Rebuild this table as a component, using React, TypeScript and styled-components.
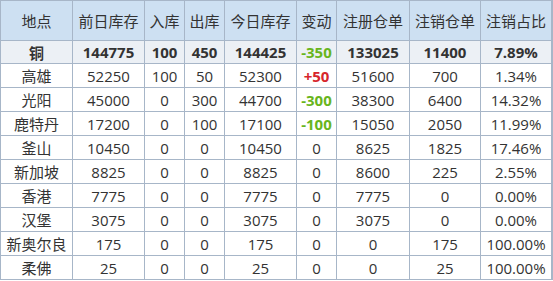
import styled, { createGlobalStyle } from "styled-components";

type Row = {
	name: string;
	prev: string;
	inQty: string;
	outQty: string;
	today: string;
	change: string;
	reg: string;
	cancel: string;
	ratio: string;
};

const headers = ["地点", "前日库存", "入库", "出库", "今日库存", "变动", "注册仓单", "注销仓单", "注销占比"];

const total: Row = {
	name: "铜",
	prev: "144775",
	inQty: "100",
	outQty: "450",
	today: "144425",
	change: "-350",
	reg: "133025",
	cancel: "11400",
	ratio: "7.89%",
};

const rows: Row[] = [
	{ name: "高雄", prev: "52250", inQty: "100", outQty: "50", today: "52300", change: "+50", reg: "51600", cancel: "700", ratio: "1.34%" },
	{ name: "光阳", prev: "45000", inQty: "0", outQty: "300", today: "44700", change: "-300", reg: "38300", cancel: "6400", ratio: "14.32%" },
	{ name: "鹿特丹", prev: "17200", inQty: "0", outQty: "100", today: "17100", change: "-100", reg: "15050", cancel: "2050", ratio: "11.99%" },
	{ name: "釜山", prev: "10450", inQty: "0", outQty: "0", today: "10450", change: "0", reg: "8625", cancel: "1825", ratio: "17.46%" },
	{ name: "新加坡", prev: "8825", inQty: "0", outQty: "0", today: "8825", change: "0", reg: "8600", cancel: "225", ratio: "2.55%" },
	{ name: "香港", prev: "7775", inQty: "0", outQty: "0", today: "7775", change: "0", reg: "7775", cancel: "0", ratio: "0.00%" },
	{ name: "汉堡", prev: "3075", inQty: "0", outQty: "0", today: "3075", change: "0", reg: "3075", cancel: "0", ratio: "0.00%" },
	{ name: "新奥尔良", prev: "175", inQty: "0", outQty: "0", today: "175", change: "0", reg: "0", cancel: "175", ratio: "100.00%" },
	{ name: "柔佛", prev: "25", inQty: "0", outQty: "0", today: "25", change: "0", reg: "0", cancel: "25", ratio: "100.00%" },
];

const GlobalStyle = createGlobalStyle`
	body {
		margin: 0;
		background: #ffffff;
		font-family: "Open Sans", "Noto Sans CJK SC", sans-serif;
	}
`;

const Grid = styled.div`
	display: grid;
	grid-template-columns: 71px 71px 39px 39px 71px 39px 72px 70px 70px;
	grid-template-rows: 39px 22px repeat(9, 23px);
	gap: 1px;
	padding: 1px;
	width: 552px;
	background: #a7b6c8;
`;

type Tone = "head" | "total" | "body";

const Cell = styled.div<{ $tone: Tone }>`
	display: flex;
	align-items: center;
	justify-content: center;
	white-space: nowrap;
	font-size: 15px;
	color: #333333;
	font-weight: ${(p) => (p.$tone === "total" ? 700 : 400)};
	background: ${(p) =>
		p.$tone === "head" ? "#cde0f2" : p.$tone === "total" ? "#ecf0f5" : "#ffffff"};
`;

const Change = styled.span<{ $dir: "up" | "down" | "flat" }>`
	font-weight: ${(p) => (p.$dir === "flat" ? 400 : 700)};
	color: ${(p) => (p.$dir === "up" ? "#d7262b" : p.$dir === "down" ? "#68b51c" : "#333333")};
`;

function changeDir(v: string) {
	if (v.startsWith("+")) return "up";
	if (v.startsWith("-")) return "down";
	return "flat";
}

function DataRow({ row, tone }: { row: Row; tone: Tone }) {
	return (
		<>
			<Cell $tone={tone}>{row.name}</Cell>
			<Cell $tone={tone}>{row.prev}</Cell>
			<Cell $tone={tone}>{row.inQty}</Cell>
			<Cell $tone={tone}>{row.outQty}</Cell>
			<Cell $tone={tone}>{row.today}</Cell>
			<Cell $tone={tone}>
				<Change $dir={changeDir(row.change)}>{row.change}</Change>
			</Cell>
			<Cell $tone={tone}>{row.reg}</Cell>
			<Cell $tone={tone}>{row.cancel}</Cell>
			<Cell $tone={tone}>{row.ratio}</Cell>
		</>
	);
}

export default function App() {
	return (
		<>
			<GlobalStyle />
			<Grid>
				{headers.map((h) => (
					<Cell key={h} $tone="head">
						{h}
					</Cell>
				))}
				<DataRow row={total} tone="total" />
				{rows.map((r) => (
					<DataRow key={r.name} row={r} tone="body" />
				))}
			</Grid>
		</>
	);
}
